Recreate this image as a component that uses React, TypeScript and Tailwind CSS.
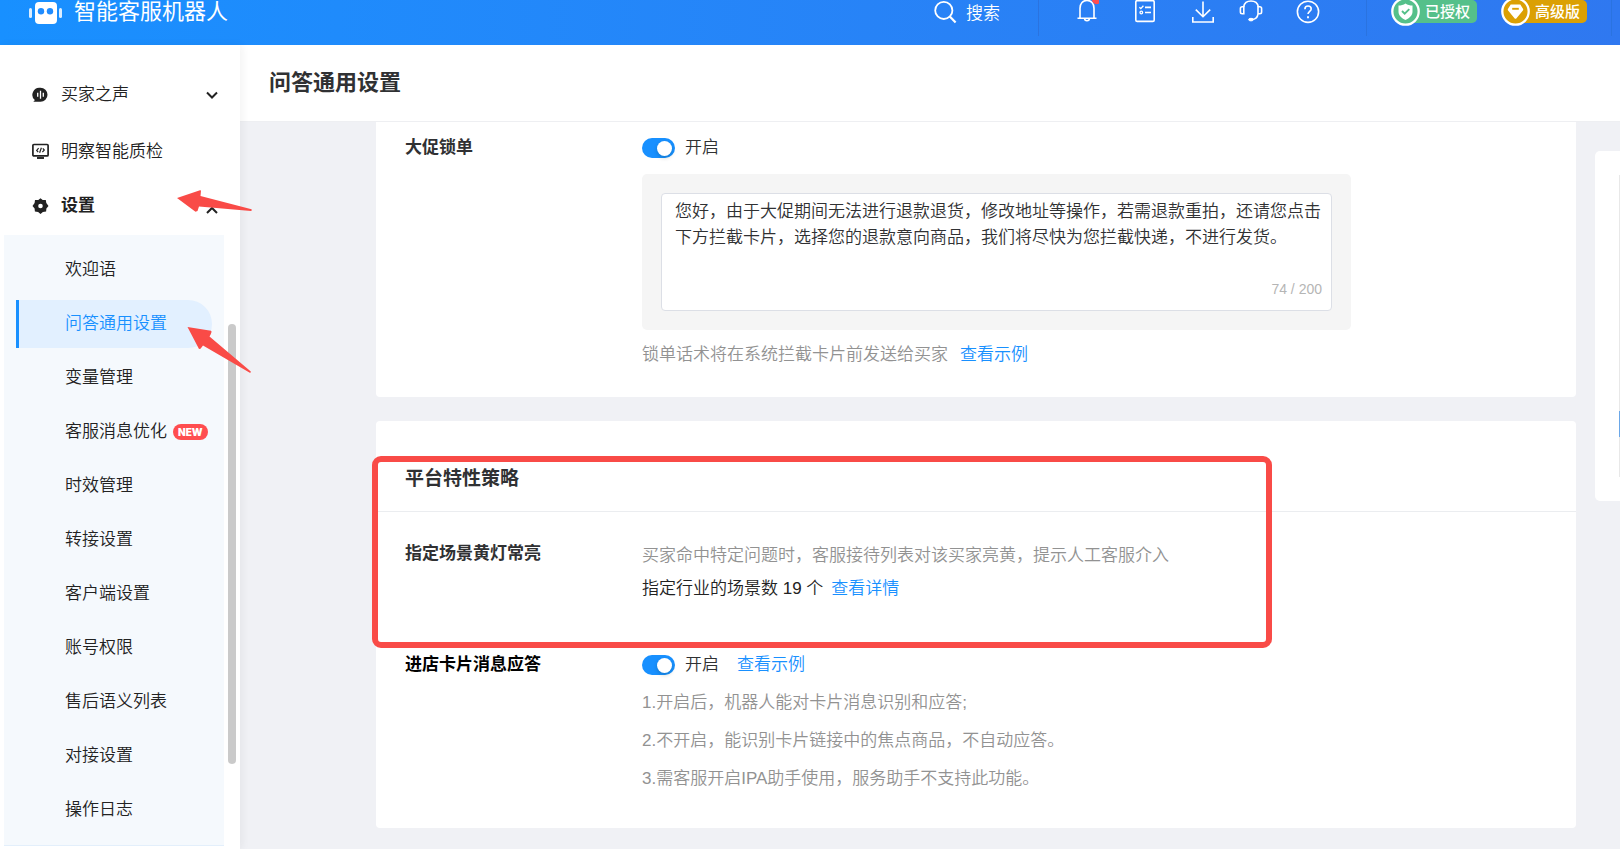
import type { ReactNode } from 'react';

const sections = [
  '欢迎语',
  '问答通用设置',
  '变量管理',
  '客服消息优化',
  '时效管理',
  '转接设置',
  '客户端设置',
  '账号权限',
  '售后语义列表',
  '对接设置',
  '操作日志',
];

const notes = [
  '1.开启后，机器人能对卡片消息识别和应答;',
  '2.不开启，能识别卡片链接中的焦点商品，不自动应答。',
  '3.需客服开启IPA助手使用，服务助手不支持此功能。',
];

const lockMessage =
  '您好，由于大促期间无法进行退款退货，修改地址等操作，若需退款重拍，还请您点击下方拦截卡片，选择您的退款意向商品，我们将尽快为您拦截快递，不进行发货。';

function RobotLogo() {
  return (
    <svg width="34" height="24" viewBox="0 0 34 24" fill="#fff" aria-hidden="true">
      <rect x="6" y="2" width="22" height="22" rx="4" />
      <rect x="0" y="8" width="3" height="10" rx="1.5" opacity=".85" />
      <rect x="30" y="8" width="3" height="10" rx="1.5" opacity=".85" />
      <circle cx="12" cy="11.3" r="3.2" fill="#1f8cff" />
      <circle cx="21" cy="11.3" r="3.2" fill="#1f8cff" />
    </svg>
  );
}

function IconButton({ label, children }: { label: string; children: ReactNode }) {
  return (
    <button type="button" aria-label={label} className="shrink-0">
      <svg width="24" height="24" viewBox="0 1 24 24" fill="none" stroke="#fff" strokeWidth="1.6" aria-hidden="true">
        {children}
      </svg>
    </button>
  );
}

function Divider() {
  return <span className="h-9 w-px shrink-0 self-start bg-[#2a73e0]" />;
}

function TopBar() {
  return (
    <header className="flex h-[45px] shrink-0 items-start overflow-hidden bg-linear-to-r from-[#1890ff] to-[#2f78f0] pr-2 text-white">
      <div className="flex h-6 items-center gap-[11px] pl-[29px]">
        <RobotLogo />
        <span className="text-[22px] leading-6 font-normal whitespace-nowrap">智能客服机器人</span>
      </div>
      <div className="ml-auto flex items-start">
        <button type="button" className="mr-[38px] flex h-[27px] items-center gap-2 text-[17px] leading-6 whitespace-nowrap">
          <svg width="24" height="24" viewBox="0 0 24 24" fill="none" stroke="#fff" strokeWidth="1.8" className="self-start" aria-hidden="true">
            <circle cx="9.8" cy="10.4" r="8.6" />
            <path d="M15.8 16.6 21.6 22.6" strokeWidth="2.2" />
          </svg>
          搜索
        </button>
        <Divider />
        <div className="ml-9 flex gap-[34px]">
          <IconButton label="通知">
            <path d="M2.5 19.2h19M5 19V9.2C5 4.6 8 1.4 12 1.4s7 3.2 7 7.8V19" />
            <path d="M9.6 19.6a2.4 2.2 0 0 0 4.8 0" />
            <circle cx="12" cy="1" r="1.1" fill="#fff" stroke="none" />
            <circle cx="21.5" cy=".6" r="4.6" fill="#ff4d4f" stroke="none" />
          </IconButton>
          <IconButton label="任务">
            <rect x="2.8" y="1.6" width="18.4" height="20.8" rx="1.4" />
            <path d="M12 8.4h6M12 13.5h6" />
            <path d="m6.4 8.3 1.4 1.3 2.6-2.8" strokeWidth="1.3" />
            <circle cx="8.3" cy="13.5" r="1.3" strokeWidth="1.3" />
          </IconButton>
          <IconButton label="下载">
            <path d="M12 2.4v15.2M4.8 10.6l7.2 7.1 7.2-7.1M1.8 18v5h20.4v-5" />
          </IconButton>
        </div>
        <div className="ml-6 flex gap-[33px]">
          <IconButton label="客服">
            <path d="M4.600 7.800C5.300 4.200 8.300 2 12 2s6.700 2.200 7.400 5.800M19 15.200c-.5 3.200-2.800 5-5.400 5.300" />
            <path d="M4.800 7.800v6.900H3.200c-1.200 0-1.800-.8-1.800-1.700V9.600c0-1 .6-1.800 1.800-1.800zM19 7.800v6.900h1.800c1.200 0 1.800-.8 1.800-1.700V9.600c0-1-.6-1.800-1.800-1.800z" />
            <ellipse cx="12" cy="20.600" rx="2.400" ry="1.300" fill="#fff" strokeWidth="1" />
          </IconButton>
          <IconButton label="帮助">
            <circle cx="12" cy="12.800" r="10.600" />
            <path d="M8.900 10.200C8.900 8.200 10.200 7 12 7s3.200 1.200 3.200 2.900c0 2.300-3.200 2.600-3.200 5.200" />
            <path d="M12 17.200v2" strokeWidth="1.900" />
          </IconButton>
        </div>
        <span className="w-[46px]" />
        <Divider />
        <div className="ml-6 flex items-start gap-6">
          <a href="#license" className="flex h-[23px] items-center gap-[5px] rounded-r-[5px] bg-linear-to-r from-transparent from-10% to-[#55c08a] to-10% pr-[7px]">
            <svg width="29" height="29" viewBox="0 0 29 29" aria-hidden="true">
              <circle cx="14.500" cy="14.500" r="13.200" fill="#55c08a" stroke="#fff" strokeWidth="2.300" />
              <path d="M14.500 6.500c2 1.500 4.500 2 7 2v6c0 4-3 6.800-7 8.500-4-1.700-7-4.500-7-8.500v-6c2.500 0 5-.5 7-2z" fill="#fff" />
              <path d="m11 14 2.700 2.700 4.600-4.600" fill="none" stroke="#55c08a" strokeWidth="1.900" />
            </svg>
            <span className="text-[15px] leading-[22px] font-medium whitespace-nowrap">已授权</span>
          </a>
          <a href="#plan" className="flex h-[23px] items-center gap-[5px] rounded-r-[5px] bg-linear-to-r from-transparent from-10% to-[#dba004] to-10% pr-[7px]">
            <svg width="29" height="29" viewBox="0 0 29 29" aria-hidden="true">
              <circle cx="14.500" cy="14.500" r="13.200" fill="#dba004" stroke="#fff" strokeWidth="2.300" />
              <path d="M9.700 7.600h9.600l2.800 4.400c.3.500.2 1-.2 1.400l-6.400 7.900c-.6.700-1.400.7-2 0l-6.400-7.900c-.4-.4-.5-.9-.2-1.400z" fill="#fff" />
              <path d="M11.200 11.800h6.600" stroke="#dba004" strokeWidth="1.900" />
            </svg>
            <span className="text-[15px] leading-[22px] font-medium whitespace-nowrap">高级版</span>
          </a>
        </div>
        <span className="w-6" />
        <Divider />
      </div>
    </header>
  );
}

function Chevron({ up = false }: { up?: boolean }) {
  return (
    <svg width="12" height="16" viewBox="0 0 12 16" fill="none" stroke="#222" strokeWidth="2" className="mr-[22px] ml-auto" aria-hidden="true">
      <path d={up ? 'M1 15 6 10l5 5' : 'M1 5.500l5 5 5-5'} />
    </svg>
  );
}

function Sidebar() {
  return (
    <aside className="relative z-10 flex w-60 shrink-0 flex-col bg-white text-[17px] text-[#222] shadow-[2px_0_8px_rgba(29,35,41,0.06)]">
      <nav className="flex flex-col pt-[22px]">
        <button type="button" className="flex h-14 items-center pl-8">
          <svg width="17" height="17" viewBox="0 0 17 17" className="mr-3" aria-hidden="true">
            <path d="M8.500.8a7 7 0 1 1 0 14H1.200c1-.5 1.400-1 1.400-2A7 7 0 0 1 8.500.8z" fill="#222" />
            <path d="M5.700 5.800v4M8.500 3.800v8M11.300 5.800v4" stroke="#fff" strokeWidth="1.300" />
          </svg>
          买家之声
          <Chevron />
        </button>
        <a href="#inspection" className="flex h-[57px] items-center pl-8">
          <svg width="17" height="17" viewBox="0 0 17 17" fill="none" stroke="#222" className="mr-3" aria-hidden="true">
            <rect x=".9" y="1.500" width="15.200" height="11.400" rx="1" strokeWidth="1.700" />
            <path d="M5 15h7" strokeWidth="1.900" />
            <path d="M6.600 5.200 4.700 7.400l1.500 1.700M10.400 9.200 12.300 7l-1.500-1.700M9.400 4.700 7.600 9.700" strokeWidth="1.200" />
          </svg>
          明察智能质检
        </a>
        <button type="button" className="flex h-[52px] items-center pl-8 font-bold">
          <svg width="17" height="17" viewBox="0 0 17 17" className="mr-3" aria-hidden="true">
            <path d="M8.500.3 10.700 2 13.800 1.900 14.300 5 16.500 8 14.400 10.400 14.100 13.500 10.900 13.900 8.500 16 6.100 13.900 2.900 13.500 2.600 10.400.5 8 2.600 5 3 2 6.300 2z" fill="#222" />
            <circle cx="8.500" cy="8" r="2.300" fill="#fff" />
          </svg>
          设置
          <Chevron up />
        </button>
      </nav>
      <ul className="mt-[3px] mr-4 ml-1 flex flex-col gap-1.5 border-b border-[#e3effb] bg-[#f5f9fd] py-[11px]">
        {sections.map((name) => {
          const active = name === '问答通用设置';
          return (
            <li key={name}>
              <a
                href={`#${name}`}
                aria-current={active ? 'page' : undefined}
                className={
                  active
                    ? 'mr-3 ml-3 flex h-12 items-center rounded-r-full border-l-[3px] border-[#1890ff] bg-[#e2f0ff] pl-[46px] text-[#1890ff]'
                    : 'mr-3 ml-3 flex h-12 items-center pl-[49px]'
                }
              >
                {name}
                {name === '客服消息优化' && (
                  <span className="ml-1.5 rounded-full bg-[#ff4d4f] px-[5px] font-['Inter'] text-[10px] leading-4 font-black text-white">NEW</span>
                )}
              </a>
            </li>
          );
        })}
      </ul>
      <span className="absolute top-[279px] right-1 h-[440px] w-2 rounded-full bg-[#cacaca]" />
    </aside>
  );
}

function Toggle() {
  return (
    <label className="flex items-center gap-2.5 whitespace-nowrap">
      <input
        type="checkbox"
        role="switch"
        defaultChecked
        className="flex h-5 w-[33px] appearance-none items-center rounded-full bg-[#bfbfbf] px-[3px] before:size-[15px] before:rounded-full before:bg-white before:shadow-[0_2px_4px_rgba(0,35,11,0.2)] checked:justify-end checked:bg-[#1890ff]"
      />
      开启
    </label>
  );
}

function Row({ label, children }: { label: string; children: ReactNode }) {
  return (
    <div className="flex px-[29px]">
      <h3 className="w-[237px] shrink-0 font-bold">{label}</h3>
      <div className="min-w-0 flex-1">{children}</div>
    </div>
  );
}

function Link({ children }: { children: ReactNode }) {
  return (
    <a href="#example" className="text-[#1890ff]">
      {children}
    </a>
  );
}

function Annotations() {
  return (
    <svg width="260" height="400" viewBox="0 0 260 400" className="pointer-events-none absolute top-0 left-0 z-20" fill="#f94b47" aria-hidden="true">
      <path d="M177 198 200 190.200 201 190.500 200.500 196 251.500 209.300Q252.500 210.500 251 211L199 206.500 197.500 211 195.500 211.700z" />
      <path d="M187.500 327 211 330.800Q212.500 331.500 209.500 336.500L250.800 371.500Q251 373 249.800 372.800L203 345.500 200.500 348.800 199 349z" />
    </svg>
  );
}

export default function App() {
  return (
    <div
      lang="zh-CN"
      className="relative flex h-screen flex-col overflow-hidden bg-[#f0f1f5] font-['Liberation_Sans','Noto_Sans_CJK_SC',sans-serif] text-[17px] leading-[26px] font-[350] text-[#303133]"
    >
      <TopBar />
      <div className="flex min-h-0 flex-1">
        <Sidebar />
        <main className="flex min-w-0 flex-1 flex-col">
          <div className="flex h-[77px] shrink-0 items-center border-b border-[#eeeff2] bg-white pl-[29px]">
            <h1 className="text-[22px] font-bold">问答通用设置</h1>
          </div>
          <div className="flex items-start">
            <div className="ml-[136px] flex min-w-0 flex-1 flex-col gap-6">
              <section className="rounded-b-[4px] bg-white pt-[13px] pb-[29px]">
                <Row label="大促锁单">
                  <Toggle />
                  <div className="mt-[13px] max-w-[709px] rounded-[5px] bg-[#f5f5f5] p-[19px]">
                    <div className="flex flex-col rounded-[4px] border border-[#dcdfe6] bg-white pb-2">
                      <textarea
                        aria-label="锁单话术"
                        rows={3}
                        defaultValue={lockMessage}
                        className="block h-[82px] w-full resize-none overflow-hidden bg-transparent pt-[5px] pr-2 pl-[13px] leading-[26px] outline-none"
                      />
                      <span className="mr-[9px] self-end text-[14px] text-[#b5b5b5]">74 / 200</span>
                    </div>
                  </div>
                  <p className="mt-3 flex gap-3 text-[#929292]">
                    锁单话术将在系统拦截卡片前发送给买家
                    <Link>查看示例</Link>
                  </p>
                </Row>
              </section>
              <section className="relative rounded-[4px] bg-white pb-9">
                <h2 className="border-b border-[#ebedf0] px-[29px] pt-[45px] pb-[19px] text-[19px] font-bold">平台特性策略</h2>
                <div className="pt-[29px]">
                  <Row label="指定场景黄灯常亮">
                    <p className="pt-0.5 text-[#929292]">买家命中特定问题时，客服接待列表对该买家亮黄，提示人工客服介入</p>
                    <p className="mt-[7px] flex gap-2 text-[#222]">
                      指定行业的场景数 19 个<Link>查看详情</Link>
                    </p>
                  </Row>
                </div>
                <div className="pt-[50px] text-black">
                  <Row label="进店卡片消息应答">
                    <div className="flex gap-[18px] text-[#303133]">
                      <Toggle />
                      <Link>查看示例</Link>
                    </div>
                    <ul className="mt-3 flex flex-col gap-3 text-[#929292]">
                      {notes.map((note) => (
                        <li key={note}>{note}</li>
                      ))}
                    </ul>
                  </Row>
                </div>
                <div className="pointer-events-none absolute top-[35px] -left-1 h-48 w-[900px] rounded-[9px] border-[6px] border-[#f94b47]" />
              </section>
            </div>
            <aside className="mt-[29px] ml-[19px] w-[25px] shrink-0 rounded-l-[5px] bg-white py-6">
              <div className="ml-auto flex h-[302px] w-px flex-col bg-[#e8e8e8] pt-[236px]">
                <span className="h-[26px] bg-[#6aa7e8]" />
              </div>
            </aside>
          </div>
        </main>
      </div>
      <Annotations />
    </div>
  );
}
